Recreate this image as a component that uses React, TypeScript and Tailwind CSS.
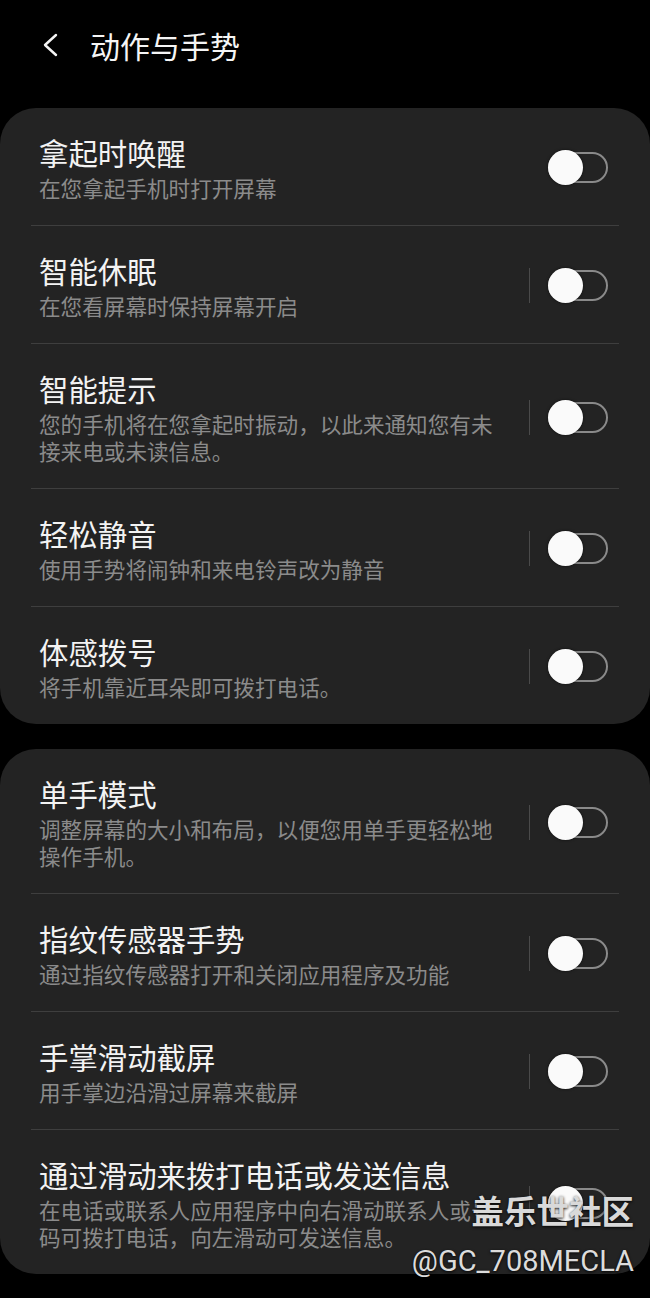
import React from "react";

interface SettingItem {
  title: string;
  desc: string[];
  divider: boolean;
}

const groups: SettingItem[][] = [
  [
    { title: "拿起时唤醒", desc: ["在您拿起手机时打开屏幕"], divider: false },
    { title: "智能休眠", desc: ["在您看屏幕时保持屏幕开启"], divider: true },
    {
      title: "智能提示",
      desc: ["您的手机将在您拿起时振动，以此来通知您有未", "接来电或未读信息。"],
      divider: true,
    },
    { title: "轻松静音", desc: ["使用手势将闹钟和来电铃声改为静音"], divider: true },
    { title: "体感拨号", desc: ["将手机靠近耳朵即可拨打电话。"], divider: true },
  ],
  [
    {
      title: "单手模式",
      desc: ["调整屏幕的大小和布局，以便您用单手更轻松地", "操作手机。"],
      divider: true,
    },
    { title: "指纹传感器手势", desc: ["通过指纹传感器打开和关闭应用程序及功能"], divider: true },
    { title: "手掌滑动截屏", desc: ["用手掌边沿滑过屏幕来截屏"], divider: true },
    {
      title: "通过滑动来拨打电话或发送信息",
      desc: ["在电话或联系人应用程序中向右滑动联系人或号", "码可拨打电话，向左滑动可发送信息。"],
      divider: true,
    },
  ],
];

const Toggle = () => (
  <div className="relative w-[60px] h-[35px] flex items-center shrink-0">
    <div className="w-full h-[31px] rounded-full border-2 border-[#8a8a8a]" />
    {/* knob */}
    <div className="absolute left-0 top-0 w-[35px] h-[35px] rounded-full bg-[#fafafa] shadow-[0_0_3px_rgba(0,0,0,0.6)]" />
  </div>
);

const Row = ({ item }: { item: SettingItem }) => (
  <div className="flex items-center pl-[39px] pr-[42px] pt-[26px] pb-[24px]">
    <div className="w-[470px] shrink-0 flex flex-col gap-[4px]">
      <p className="text-[29.4px] leading-[36px] text-[#f3f3f3] whitespace-nowrap">{item.title}</p>
      <div className="text-[21.6px] leading-[27px] text-[#8b8b8b]">
        {item.desc.map((line) => (
          <p key={line} className="whitespace-nowrap">
            {line}
          </p>
        ))}
      </div>
    </div>
    <div className="ml-[20px] flex items-center gap-[18px]">
      <div className={item.divider ? "w-px h-[35px] bg-[#4a4a4a]" : "w-px h-[35px]"} />
      <Toggle />
    </div>
  </div>
);

export default function App() {
  return (
    <div className="relative w-[650px] h-[1298px] bg-black overflow-hidden font-['Noto_Sans_CJK_SC',sans-serif]">
      {/* Header */}
      <div className="h-[90px] flex items-center pl-[42px]">
        <svg width="16" height="24" viewBox="0 0 16 24" fill="none" className="shrink-0">
          <path d="M14 2 L3 12 L14 22" stroke="#f5f5f5" strokeWidth="2.4" strokeLinecap="round" strokeLinejoin="round" />
        </svg>
        <h1 className="ml-[32px] text-[30px] leading-none text-[#f5f5f5]">动作与手势</h1>
      </div>

      <div className="mt-[18px] flex flex-col gap-[25px]">
        {groups.map((group, gi) => (
          <div key={gi} className="bg-[#232323] rounded-[36px]">
            {group.map((item, i) => (
              <div key={item.title}>
                {i > 0 && <div className="mx-[31px] h-px bg-[#3e3e3e]" />}
                <Row item={item} />
              </div>
            ))}
          </div>
        ))}
      </div>

      {/* watermark */}
      <div className="absolute right-[16px] top-[1194px] text-[32.5px] leading-none font-bold text-[#d9d9d9] [text-shadow:0_1px_3px_rgba(0,0,0,0.9)]">
        盖乐世社区
      </div>
      <div className="absolute right-[16px] top-[1247px] text-[29px] leading-none text-[#dcdcdc] font-['Roboto',sans-serif] [text-shadow:0_1px_3px_rgba(0,0,0,0.9)]">
        @GC_708MECLA
      </div>
    </div>
  );
}
